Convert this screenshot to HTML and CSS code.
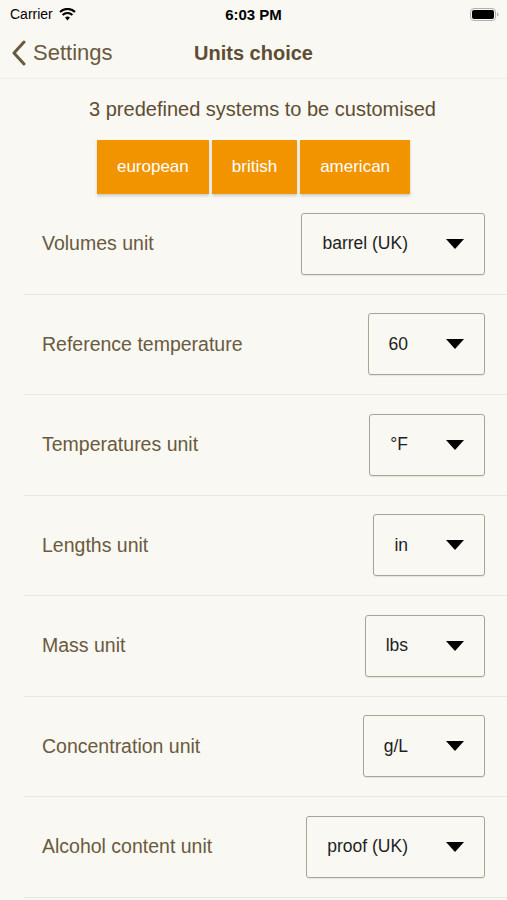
FILE: index.html
```html
<!DOCTYPE html>
<html lang="en">
<head>
    <meta charset="UTF-8">
    <meta name="viewport" content="width=device-width, initial-scale=1.0">
    <title>Units choice</title>
    <link rel="stylesheet" href="styles.css">
</head>
<body>
    <div class="status-bar">
        <div class="carrier">
            Carrier
            <svg class="wifi" width="17" height="13" viewBox="0 0 17 13">
                <path d="M8.5 12.5 L6 9.6 A3.6 3.6 0 0 1 11 9.6 Z" fill="#000"/>
                <path d="M3.6 7 A7 7 0 0 1 13.4 7" stroke="#000" stroke-width="2.2" fill="none"/>
                <path d="M1 4 A10.8 10.8 0 0 1 16 4" stroke="#000" stroke-width="2.2" fill="none"/>
            </svg>
        </div>
        <div class="clock">6:03 PM</div>
        <div class="battery">
            <svg width="29" height="13" viewBox="0 0 29 13">
                <rect x="0.5" y="0.5" width="25" height="12" rx="3.5" fill="none" stroke="#b0b0b0"/>
                <rect x="2" y="2" width="22" height="9" rx="2" fill="#000"/>
                <path d="M27 4.5 Q28.5 4.5 28.5 6.5 Q28.5 8.5 27 8.5 Z" fill="#b0b0b0"/>
            </svg>
        </div>
    </div>

    <div class="nav-bar">
        <div class="back">
            <svg width="16" height="26" viewBox="0 0 16 26">
                <path d="M13 2 L3 13 L13 24" stroke="#6a5a3e" stroke-width="3" fill="none" stroke-linecap="round" stroke-linejoin="round"/>
            </svg>
            <span>Settings</span>
        </div>
        <div class="nav-title">Units choice</div>
    </div>

    <div class="intro">
        <p class="subtitle">3 predefined systems to be customised</p>
        <div class="presets">
            <button class="preset">european</button>
            <button class="preset">british</button>
            <button class="preset">american</button>
        </div>
    </div>

    <div class="unit-list">
        <div class="unit-row">
            <span class="unit-label">Volumes unit</span>
            <div class="picker"><span>barrel (UK)</span><i class="caret"></i></div>
        </div>
        <div class="unit-row">
            <span class="unit-label">Reference temperature</span>
            <div class="picker"><span>60</span><i class="caret"></i></div>
        </div>
        <div class="unit-row">
            <span class="unit-label">Temperatures unit</span>
            <div class="picker"><span>°F</span><i class="caret"></i></div>
        </div>
        <div class="unit-row">
            <span class="unit-label">Lengths unit</span>
            <div class="picker"><span>in</span><i class="caret"></i></div>
        </div>
        <div class="unit-row">
            <span class="unit-label">Mass unit</span>
            <div class="picker"><span>lbs</span><i class="caret"></i></div>
        </div>
        <div class="unit-row">
            <span class="unit-label">Concentration unit</span>
            <div class="picker"><span>g/L</span><i class="caret"></i></div>
        </div>
        <div class="unit-row">
            <span class="unit-label">Alcohol content unit</span>
            <div class="picker"><span>proof (UK)</span><i class="caret"></i></div>
        </div>
    </div>
</body>
</html>
```

FILE: styles.css
```css
body {
    font-family: "Liberation Sans", Arial, sans-serif;
    background: #f9f8f3;
    margin: 0;
    color: #6a5a3e;
    overflow: hidden;
}
.status-bar {
    height: 28px;
    display: flex;
    align-items: center;
    justify-content: space-between;
    padding: 0 8px 0 10px;
    position: relative;
    color: #000;
    font-size: 14px;
}
.carrier {
    display: flex;
    align-items: center;
    gap: 6px;
}
.clock {
    position: absolute;
    left: 0;
    right: 0;
    text-align: center;
    font-weight: 600;
    font-size: 15px;
}
.battery {
    display: flex;
}
.nav-bar {
    height: 50px;
    display: flex;
    align-items: center;
    position: relative;
    border-bottom: 1px solid #efede6;
}
.back {
    display: flex;
    align-items: center;
    gap: 6px;
    padding-left: 11px;
    font-size: 22px;
}
.nav-title {
    position: absolute;
    left: 0;
    right: 0;
    text-align: center;
    font-weight: 700;
    font-size: 20px;
    color: #5e4d32;
}
.intro {
    text-align: center;
    padding-top: 19px;
}
.subtitle {
    margin: 0;
    padding-left: 18px;
    font-size: 20px;
    line-height: 22px;
    color: #5e4d32;
}
.presets {
    display: flex;
    justify-content: center;
    gap: 3px;
    margin-top: 20px;
}
.preset {
    font-family: inherit;
    background: #f29400;
    color: #fff;
    border: none;
    height: 54px;
    padding: 0 20px;
    font-size: 17px;
    box-shadow: 0 2px 3px rgba(0,0,0,0.18);
}
.unit-list {
    margin-left: 24px;
}
.unit-row {
    height: 100.5px;
    box-sizing: border-box;
    border-bottom: 1px solid #e9e7e0;
    display: flex;
    align-items: center;
    justify-content: space-between;
    padding: 0 22px 0 18px;
}
.unit-label {
    font-size: 19.5px;
}
.picker {
    height: 62px;
    box-sizing: border-box;
    border: 1px solid #aaa592;
    border-radius: 3px;
    display: flex;
    align-items: center;
    gap: 38px;
    padding: 0 20px;
    font-size: 17.5px;
    color: #1e1e1e;
    box-shadow: 0 1px 1px rgba(0,0,0,0.08);
}
.caret {
    width: 0;
    height: 0;
    border-left: 9px solid transparent;
    border-right: 9px solid transparent;
    border-top: 10px solid #000;
}
```
